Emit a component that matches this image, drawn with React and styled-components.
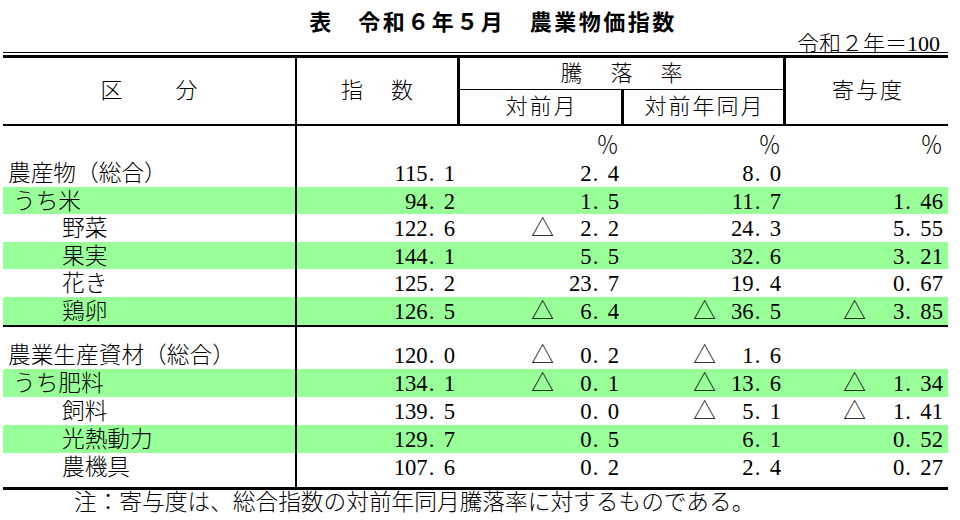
import React from 'react';
import styled, {createGlobalStyle} from 'styled-components';

const GlobalStyle = createGlobalStyle`
  html, body {
    margin: 0;
    padding: 0;
    background: #ffffff;
  }
  body {
    width: 960px;
    height: 520px;
    overflow: hidden;
    color: #000000;
    font-family: "Liberation Serif", "Noto Sans CJK JP", serif;
    font-weight: 300;
  }
`;

const COLS = [294, 163, 164, 162, 162];
const GREEN = '#99ff99';
const TEXT = 22.7;

const Page = styled.div`
  width: 960px;
  height: 520px;
  box-sizing: border-box;
  padding-top: 5px;
`;

const Title = styled.h1`
  margin: 0;
  height: 30px;
  line-height: 30px;
  padding-left: 26px;
  text-align: center;
  font-family: "Noto Sans CJK JP", sans-serif;
  font-weight: 700;
  font-size: 22px;
  letter-spacing: 2.5px;
`;

const Unit = styled.div`
  height: 17px;
  line-height: 17px;
  padding-right: 20px;
  text-align: right;
  font-size: 22px;
`;

const Frame = styled.div`
  width: 945px;
  margin-left: 3px;
  border-top: 1px solid #000;
  padding-top: 2px;
`;

const Head = styled.div`
  display: grid;
  grid-template-columns: ${COLS.map(w => w + 'px').join(' ')};
  grid-template-rows: 32px 34px;
  border-top: 3px solid #000;
  border-bottom: 2px solid #000;
`;

const HeadCell = styled.div`
  box-sizing: border-box;
  display: flex;
  align-items: center;
  justify-content: center;
  grid-column: ${p => p.$col};
  grid-row: ${p => p.$row};
  border-right: ${p => p.$line || 0}px solid #000;
  border-bottom: ${p => p.$under ? '1px solid #000' : '0'};
  font-size: 22px;
  line-height: 1;
  letter-spacing: ${p => p.$spacing || 0}px;
  padding-left: ${p => p.$spacing || 0}px;
`;

const Section = styled.div`
  border-bottom: ${p => p.$rule}px solid #000;
`;

const Row = styled.div`
  display: flex;
  height: ${p => p.$h}px;
  background: ${p => p.$hl ? GREEN : 'transparent'};
`;

const Cell = styled.div`
  box-sizing: border-box;
  flex: 0 0 ${p => p.$w}px;
  height: 100%;
  display: flex;
  align-items: ${p => p.$top ? 'flex-start' : 'center'};
  justify-content: flex-end;
  padding-right: 5px;
  padding-top: ${p => p.$top ? 9 : 3}px;
  font-size: ${TEXT}px;
  line-height: 1;
  white-space: nowrap;
`;

const LabelCell = styled(Cell)`
  justify-content: flex-start;
  padding-right: 0;
  padding-left: ${p => [5, 10, 59][p.$level]}px;
  border-right: 2px solid #000;
`;

const Tri = styled.span`
  margin-right: 0;
`;

const Num = styled.span`
  display: inline-block;
  width: ${p => p.$w}px;
  text-align: right;
`;

const Dot = styled.span`
  display: inline-block;
  box-sizing: border-box;
  width: 16px;
  padding-left: 1px;
  text-align: left;
`;

const Note = styled.div`
  height: 26px;
  line-height: 26px;
  padding-left: 74px;
  font-size: ${TEXT}px;
`;

const group1 = [
  {label: '農産物（総合）', level: 0, idx: '115.1', m: '2.4', y: '8.0', c: ''},
  {label: 'うち米', level: 1, hl: true, idx: '94.2', m: '1.5', y: '11.7', c: '1.46'},
  {label: '野菜', level: 2, idx: '122.6', m: '-2.2', y: '24.3', c: '5.55'},
  {label: '果実', level: 2, hl: true, idx: '144.1', m: '5.5', y: '32.6', c: '3.21'},
  {label: '花き', level: 2, idx: '125.2', m: '23.7', y: '19.4', c: '0.67'},
  {label: '鶏卵', level: 2, hl: true, idx: '126.5', m: '-6.4', y: '-36.5', c: '-3.85'},
];

const group2 = [
  {label: '農業生産資材（総合）', level: 0, idx: '120.0', m: '-0.2', y: '-1.6', c: ''},
  {label: 'うち肥料', level: 1, hl: true, idx: '134.1', m: '-0.1', y: '-13.6', c: '-1.34'},
  {label: '飼料', level: 2, idx: '139.5', m: '0.0', y: '-5.1', c: '-1.41'},
  {label: '光熱動力', level: 2, hl: true, idx: '129.7', m: '0.5', y: '6.1', c: '0.52'},
  {label: '農機具', level: 2, idx: '107.6', m: '0.2', y: '2.4', c: '0.27'},
];

function Figure({text}) {
  const [int, frac] = text.split('.');
  return <>{int}<Dot>.</Dot>{frac}</>;
}

// "-2.2" -> △ + "2. 2"
function Value({v, w}) {
  if (!v) return null;
  const neg = v.startsWith('-');
  return (
    <>
      {neg && <Tri>△</Tri>}
      <Num $w={w}><Figure text={v.replace('-', '')}/></Num>
    </>
  );
}

function DataRow({row, h}) {
  return (
    <Row $h={h} $hl={row.hl}>
      <LabelCell $w={COLS[0]} $level={row.level}>{row.label}</LabelCell>
      <Cell $w={COLS[1]}><Figure text={row.idx}/></Cell>
      <Cell $w={COLS[2]}><Value v={row.m} w={65}/></Cell>
      <Cell $w={COLS[3]}><Value v={row.y} w={65}/></Cell>
      <Cell $w={COLS[4]}><Value v={row.c} w={77}/></Cell>
    </Row>
  );
}

function Spacer({h}) {
  return (
    <Row $h={h}>
      <LabelCell $w={COLS[0]} $level={0}/>
    </Row>
  );
}

export default function App() {
  return (
    <Page>
      <GlobalStyle/>
      <Title>表　令和６年５月　農業物価指数</Title>
      <Unit>令和２年＝100</Unit>
      <Frame>
        <Head>
          <HeadCell $col="1" $row="1 / 3" $line={2} $spacing={3}>区　　分</HeadCell>
          <HeadCell $col="2" $row="1 / 3" $line={3} $spacing={3}>指　数</HeadCell>
          <HeadCell $col="3 / 5" $row="1" $line={3} $under $spacing={3}>騰　落　率</HeadCell>
          <HeadCell $col="3" $row="2" $line={3} $spacing={2}>対前月</HeadCell>
          <HeadCell $col="4" $row="2" $line={3} $spacing={2}>対前年同月</HeadCell>
          <HeadCell $col="5" $row="1 / 3" $spacing={2}>寄与度</HeadCell>
        </Head>

        <Section $rule={2}>
          <Row $h={33}>
            <LabelCell $w={COLS[0]} $level={0}/>
            <Cell $w={COLS[1]}/>
            <Cell $w={COLS[2]} $top>％</Cell>
            <Cell $w={COLS[3]} $top>％</Cell>
            <Cell $w={COLS[4]} $top>％</Cell>
          </Row>
          {group1.map(r => <DataRow key={r.label} row={r} h={27.6}/>)}
        </Section>

        <Section $rule={3}>
          <Spacer h={14}/>
          {group2.map(r => <DataRow key={r.label} row={r} h={28}/>)}
          <Spacer h={6}/>
        </Section>
      </Frame>
      <Note>注：寄与度は、総合指数の対前年同月騰落率に対するものである。</Note>
    </Page>
  );
}
